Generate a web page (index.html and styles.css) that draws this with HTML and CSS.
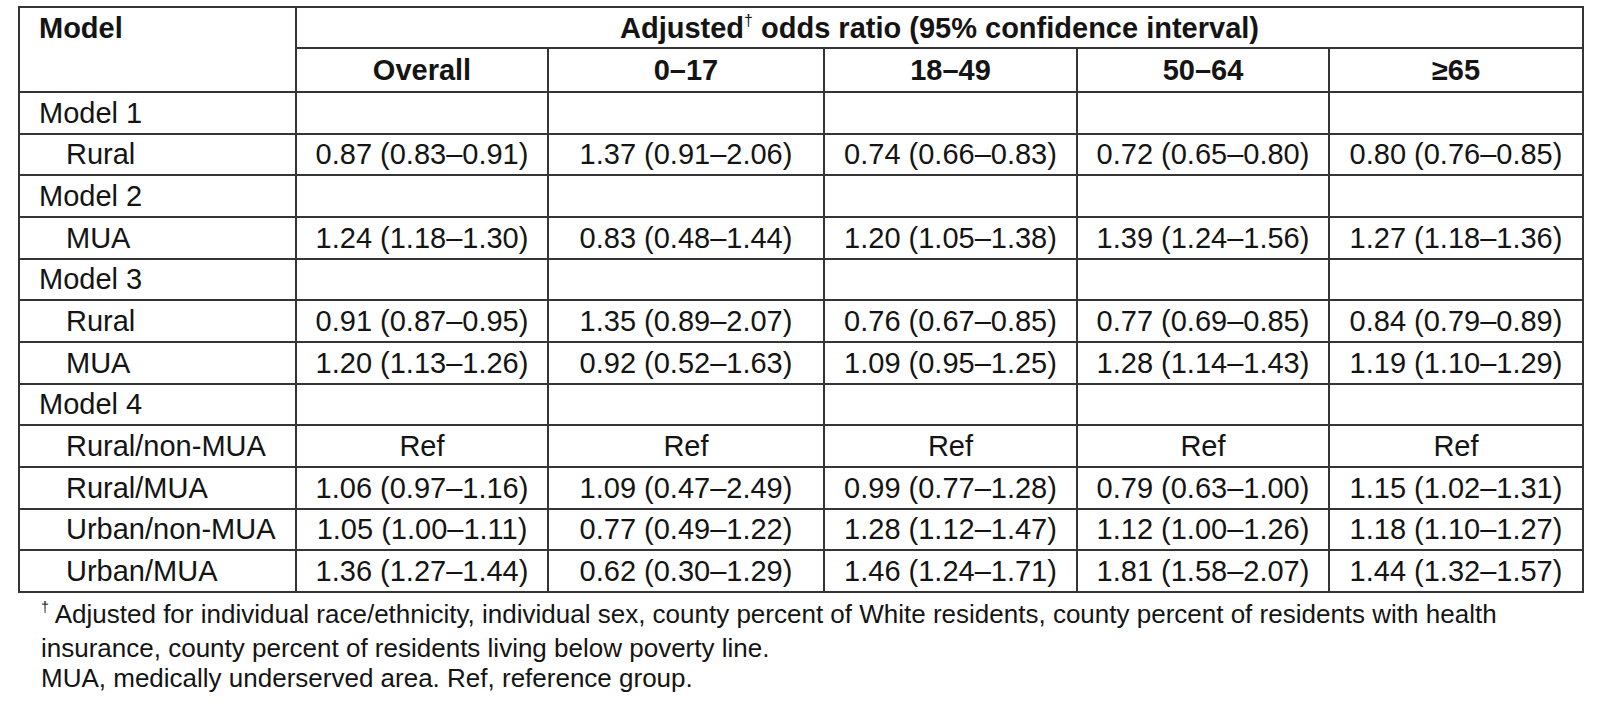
FILE: index.html
```html
<!DOCTYPE html>
<html>
<head>
<meta charset="utf-8">
<link rel="stylesheet" href="styles.css">
</head>
<body>
<table class="or-table">
  <colgroup>
    <col class="c-model">
    <col class="c-overall">
    <col class="c-a">
    <col class="c-b">
    <col class="c-c">
    <col class="c-d">
  </colgroup>
  <thead>
    <tr class="h1">
      <th class="th-model" rowspan="2">Model</th>
      <th colspan="5">Adjusted<sup>†</sup> odds ratio (95% confidence interval)</th>
    </tr>
    <tr class="h2">
      <th>Overall</th>
      <th>0–17</th>
      <th>18–49</th>
      <th>50–64</th>
      <th>≥65</th>
    </tr>
  </thead>
  <tbody>
    <tr><td class="lbl">Model 1</td><td></td><td></td><td></td><td></td><td></td></tr>
    <tr><td class="lbl sub">Rural</td><td>0.87 (0.83–0.91)</td><td>1.37 (0.91–2.06)</td><td>0.74 (0.66–0.83)</td><td>0.72 (0.65–0.80)</td><td>0.80 (0.76–0.85)</td></tr>
    <tr><td class="lbl">Model 2</td><td></td><td></td><td></td><td></td><td></td></tr>
    <tr><td class="lbl sub">MUA</td><td>1.24 (1.18–1.30)</td><td>0.83 (0.48–1.44)</td><td>1.20 (1.05–1.38)</td><td>1.39 (1.24–1.56)</td><td>1.27 (1.18–1.36)</td></tr>
    <tr><td class="lbl">Model 3</td><td></td><td></td><td></td><td></td><td></td></tr>
    <tr><td class="lbl sub">Rural</td><td>0.91 (0.87–0.95)</td><td>1.35 (0.89–2.07)</td><td>0.76 (0.67–0.85)</td><td>0.77 (0.69–0.85)</td><td>0.84 (0.79–0.89)</td></tr>
    <tr><td class="lbl sub">MUA</td><td>1.20 (1.13–1.26)</td><td>0.92 (0.52–1.63)</td><td>1.09 (0.95–1.25)</td><td>1.28 (1.14–1.43)</td><td>1.19 (1.10–1.29)</td></tr>
    <tr><td class="lbl">Model 4</td><td></td><td></td><td></td><td></td><td></td></tr>
    <tr><td class="lbl sub">Rural/non-MUA</td><td>Ref</td><td>Ref</td><td>Ref</td><td>Ref</td><td>Ref</td></tr>
    <tr><td class="lbl sub">Rural/MUA</td><td>1.06 (0.97–1.16)</td><td>1.09 (0.47–2.49)</td><td>0.99 (0.77–1.28)</td><td>0.79 (0.63–1.00)</td><td>1.15 (1.02–1.31)</td></tr>
    <tr><td class="lbl sub">Urban/non-MUA</td><td>1.05 (1.00–1.11)</td><td>0.77 (0.49–1.22)</td><td>1.28 (1.12–1.47)</td><td>1.12 (1.00–1.26)</td><td>1.18 (1.10–1.27)</td></tr>
    <tr><td class="lbl sub">Urban/MUA</td><td>1.36 (1.27–1.44)</td><td>0.62 (0.30–1.29)</td><td>1.46 (1.24–1.71)</td><td>1.81 (1.58–2.07)</td><td>1.44 (1.32–1.57)</td></tr>
  </tbody>
</table>
<div class="notes">
  <p><sup>†</sup> Adjusted for individual race/ethnicity, individual sex, county percent of White residents, county percent of residents with health<br>insurance, county percent of residents living below poverty line.</p>
  <p>MUA, medically underserved area. Ref, reference group.</p>
</div>
</body>
</html>
```

FILE: styles.css
```css
html, body {
  margin: 0;
  padding: 0;
  background: #ffffff;
}

body {
  font-family: "Liberation Sans", Arial, sans-serif;
  color: #141414;
}

.or-table {
  margin: 6px 0 0 18px;
  border-collapse: collapse;
  table-layout: fixed;
  width: 1564px;
  font-size: 29px;
}

.c-model { width: 277px; }
.c-overall { width: 252px; }
.c-a { width: 276px; }
.c-b { width: 253px; }
.c-c { width: 252px; }
.c-d { width: 254px; }

.or-table th,
.or-table td {
  border: 2px solid #353535;
  padding: 1px 0 0 0;
  text-align: center;
  vertical-align: middle;
  white-space: nowrap;
  line-height: 1;
}

.or-table th {
  font-weight: bold;
}

.or-table .th-model {
  text-align: left;
  vertical-align: top;
  padding: 6px 0 0 19px;
}

.h1 { height: 41px; }
.h2 { height: 44px; }
.or-table tbody tr { height: 41.67px; }

.or-table td.lbl {
  text-align: left;
  padding-left: 19px;
}

.or-table td.sub {
  padding-left: 46px;
}

sup {
  font-size: 0.55em;
  vertical-align: 0;
  position: relative;
  top: -0.75em;
  font-weight: normal;
}

.notes {
  margin: 6px 0 0 41px;
  font-size: 26px;
  line-height: 30px;
}

.notes p {
  margin: 0;
}
```
